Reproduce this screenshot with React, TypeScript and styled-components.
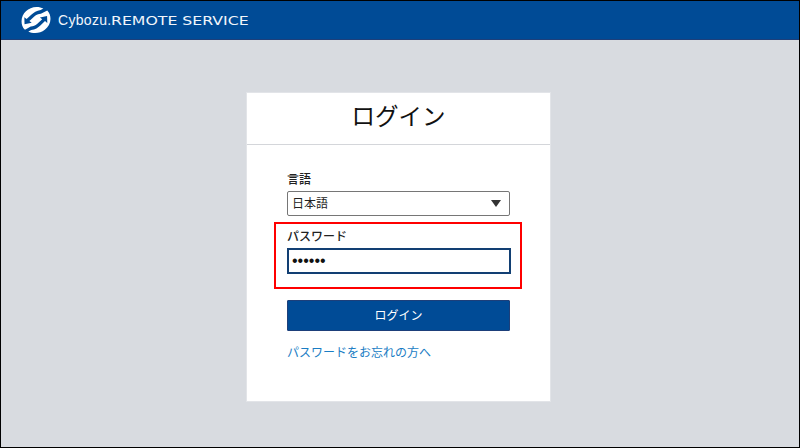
import styled, { createGlobalStyle } from 'styled-components';

const GlobalStyle = createGlobalStyle`
  html, body {
    margin: 0;
    padding: 0;
  }
  body {
    font-family: "Liberation Sans", "Noto Sans CJK JP", sans-serif;
  }
  * {
    box-sizing: border-box;
  }
`;

function Logo() {
  return (
    <svg width="31" height="28" viewBox="0 0 30 30" preserveAspectRatio="none" aria-hidden="true">
      <path
        fill="#fff"
        d="M16 1c2.600 0 4.800.6 6.600 1.700l-2.600 1.500C16 5 13.300 6.800 10.900 9.300L6.400 14 4.200 12.100 4.400 19.500 11.300 18 9.100 16 13.800 11.300C15.900 9.300 17.800 8.500 20.200 8.300L26.400 4.700C28.700 7.300 29.500 10.600 29.500 14c0 4.600-2.100 8.700-5.500 11.500-2.700 2.300-5.900 3.500-9.300 3.500-2.500 0-4.800-.6-6.600-1.700l2.800-1.500c3.900-.7 6.500-2.500 8.800-4.900l4.500-4.700 2.200 1.900-.2-7.400-6.900 1.500 2.200 2-4.700 4.700c-2.100 2-4 2.800-6.400 3L4.800 25.500C2.300 23 1.500 19.700 1.500 16.300 1.500 8 8 1 16 1z"
      />
    </svg>
  );
}

export default function App() {
  return (
    <>
      <GlobalStyle />
      <Page>
        <Header>
          <Logo />
          <Brand>
            Cybozu.<strong>REMOTE SERVICE</strong>
          </Brand>
        </Header>
        <Main>
          <Card>
            <CardTitle>ログイン</CardTitle>
            <Form>
              <Label>言語</Label>
              <SelectWrap>
                <LanguageSelect defaultValue="ja">
                  <option value="ja">日本語</option>
                  <option value="en">English</option>
                </LanguageSelect>
                <Arrow />
              </SelectWrap>
              <PasswordField>
                <Label>パスワード</Label>
                <PasswordInput type="password" defaultValue="secret" />
                <Highlight />
              </PasswordField>
              <SubmitButton type="button">ログイン</SubmitButton>
              <ForgotLink href="#">パスワードをお忘れの方へ</ForgotLink>
            </Form>
          </Card>
        </Main>
      </Page>
    </>
  );
}

const Page = styled.div`
  display: flex;
  flex-direction: column;
  width: 800px;
  height: 448px;
  border: 1px solid #000;
  background: #d8dbe0;
  overflow: hidden;
`;

const Header = styled.header`
  display: flex;
  align-items: center;
  gap: 7px;
  height: 39px;
  padding: 0 0 0 19px;
  background: #004b96;
  border-bottom: 1px solid #1d3f7a;
`;

const Brand = styled.div`
  font-family: "Liberation Sans", sans-serif;
  font-size: 14px;
  letter-spacing: 0.3px;
  color: #f2f6fb;
  strong {
    display: inline-block;
    font-family: "DejaVu Sans", sans-serif;
    font-size: 13px;
    font-weight: 400;
    transform: scaleX(1.21);
    transform-origin: left center;
    letter-spacing: 0;
  }
`;

const Main = styled.main`
  display: flex;
  justify-content: center;
  align-items: flex-start;
  flex: 1;
  padding: 52px 3px 0 0;
`;

const Card = styled.section`
  width: 305px;
  height: 310px;
  background: #fff;
  border: 1px solid #e2e4e8;
`;

const CardTitle = styled.h1`
  margin: 0;
  height: 52px;
  border-bottom: 1px solid #d4d6da;
  font-size: 23.500px;
  line-height: 48px;
  font-weight: 400;
  text-align: center;
  color: #111;
`;

const Form = styled.div`
  display: flex;
  flex-direction: column;
  padding: 26px 40px 0;
`;

const Label = styled.label`
  display: block;
  height: 20px;
  font-size: 12px;
  line-height: 18px;
  font-weight: 500;
  color: #222;
`;

const SelectWrap = styled.div`
  position: relative;
  width: 223px;
  height: 25px;
`;

const LanguageSelect = styled.select`
  appearance: none;
  width: 100%;
  height: 100%;
  padding: 0 0 0 4px;
  border: 1px solid #767676;
  border-radius: 2px;
  background: #fff;
  font-family: inherit;
  font-size: 12px;
  color: #222;
`;

const Arrow = styled.span`
  position: absolute;
  top: 9px;
  right: 9px;
  width: 0;
  height: 0;
  border-left: 5px solid transparent;
  border-right: 5px solid transparent;
  border-top: 7px solid #333;
`;

const PasswordField = styled.div`
  position: relative;
  padding-top: 12px;
`;

const Highlight = styled.div`
  position: absolute;
  top: 6px;
  left: -13px;
  width: 248px;
  height: 67px;
  border: 2px solid #f00;
  pointer-events: none;
`;

const PasswordInput = styled.input`
  display: block;
  width: 224px;
  height: 26px;
  padding: 0 3px;
  border: 2px solid #123f73;
  background: #fff;
  font-family: inherit;
  font-size: 16px;
  color: #111;
  outline: none;
`;

const SubmitButton = styled.button`
  width: 223px;
  height: 31px;
  margin-top: 26px;
  padding: 0 0 2px;
  border: 1px solid #1d3f7a;
  border-radius: 1px;
  background: #004b96;
  font-family: inherit;
  font-size: 12px;
  color: #fff;
`;

const ForgotLink = styled.a`
  margin-top: 14px;
  font-size: 12px;
  line-height: 16px;
  color: #1a7dc4;
  text-decoration: none;
`;
